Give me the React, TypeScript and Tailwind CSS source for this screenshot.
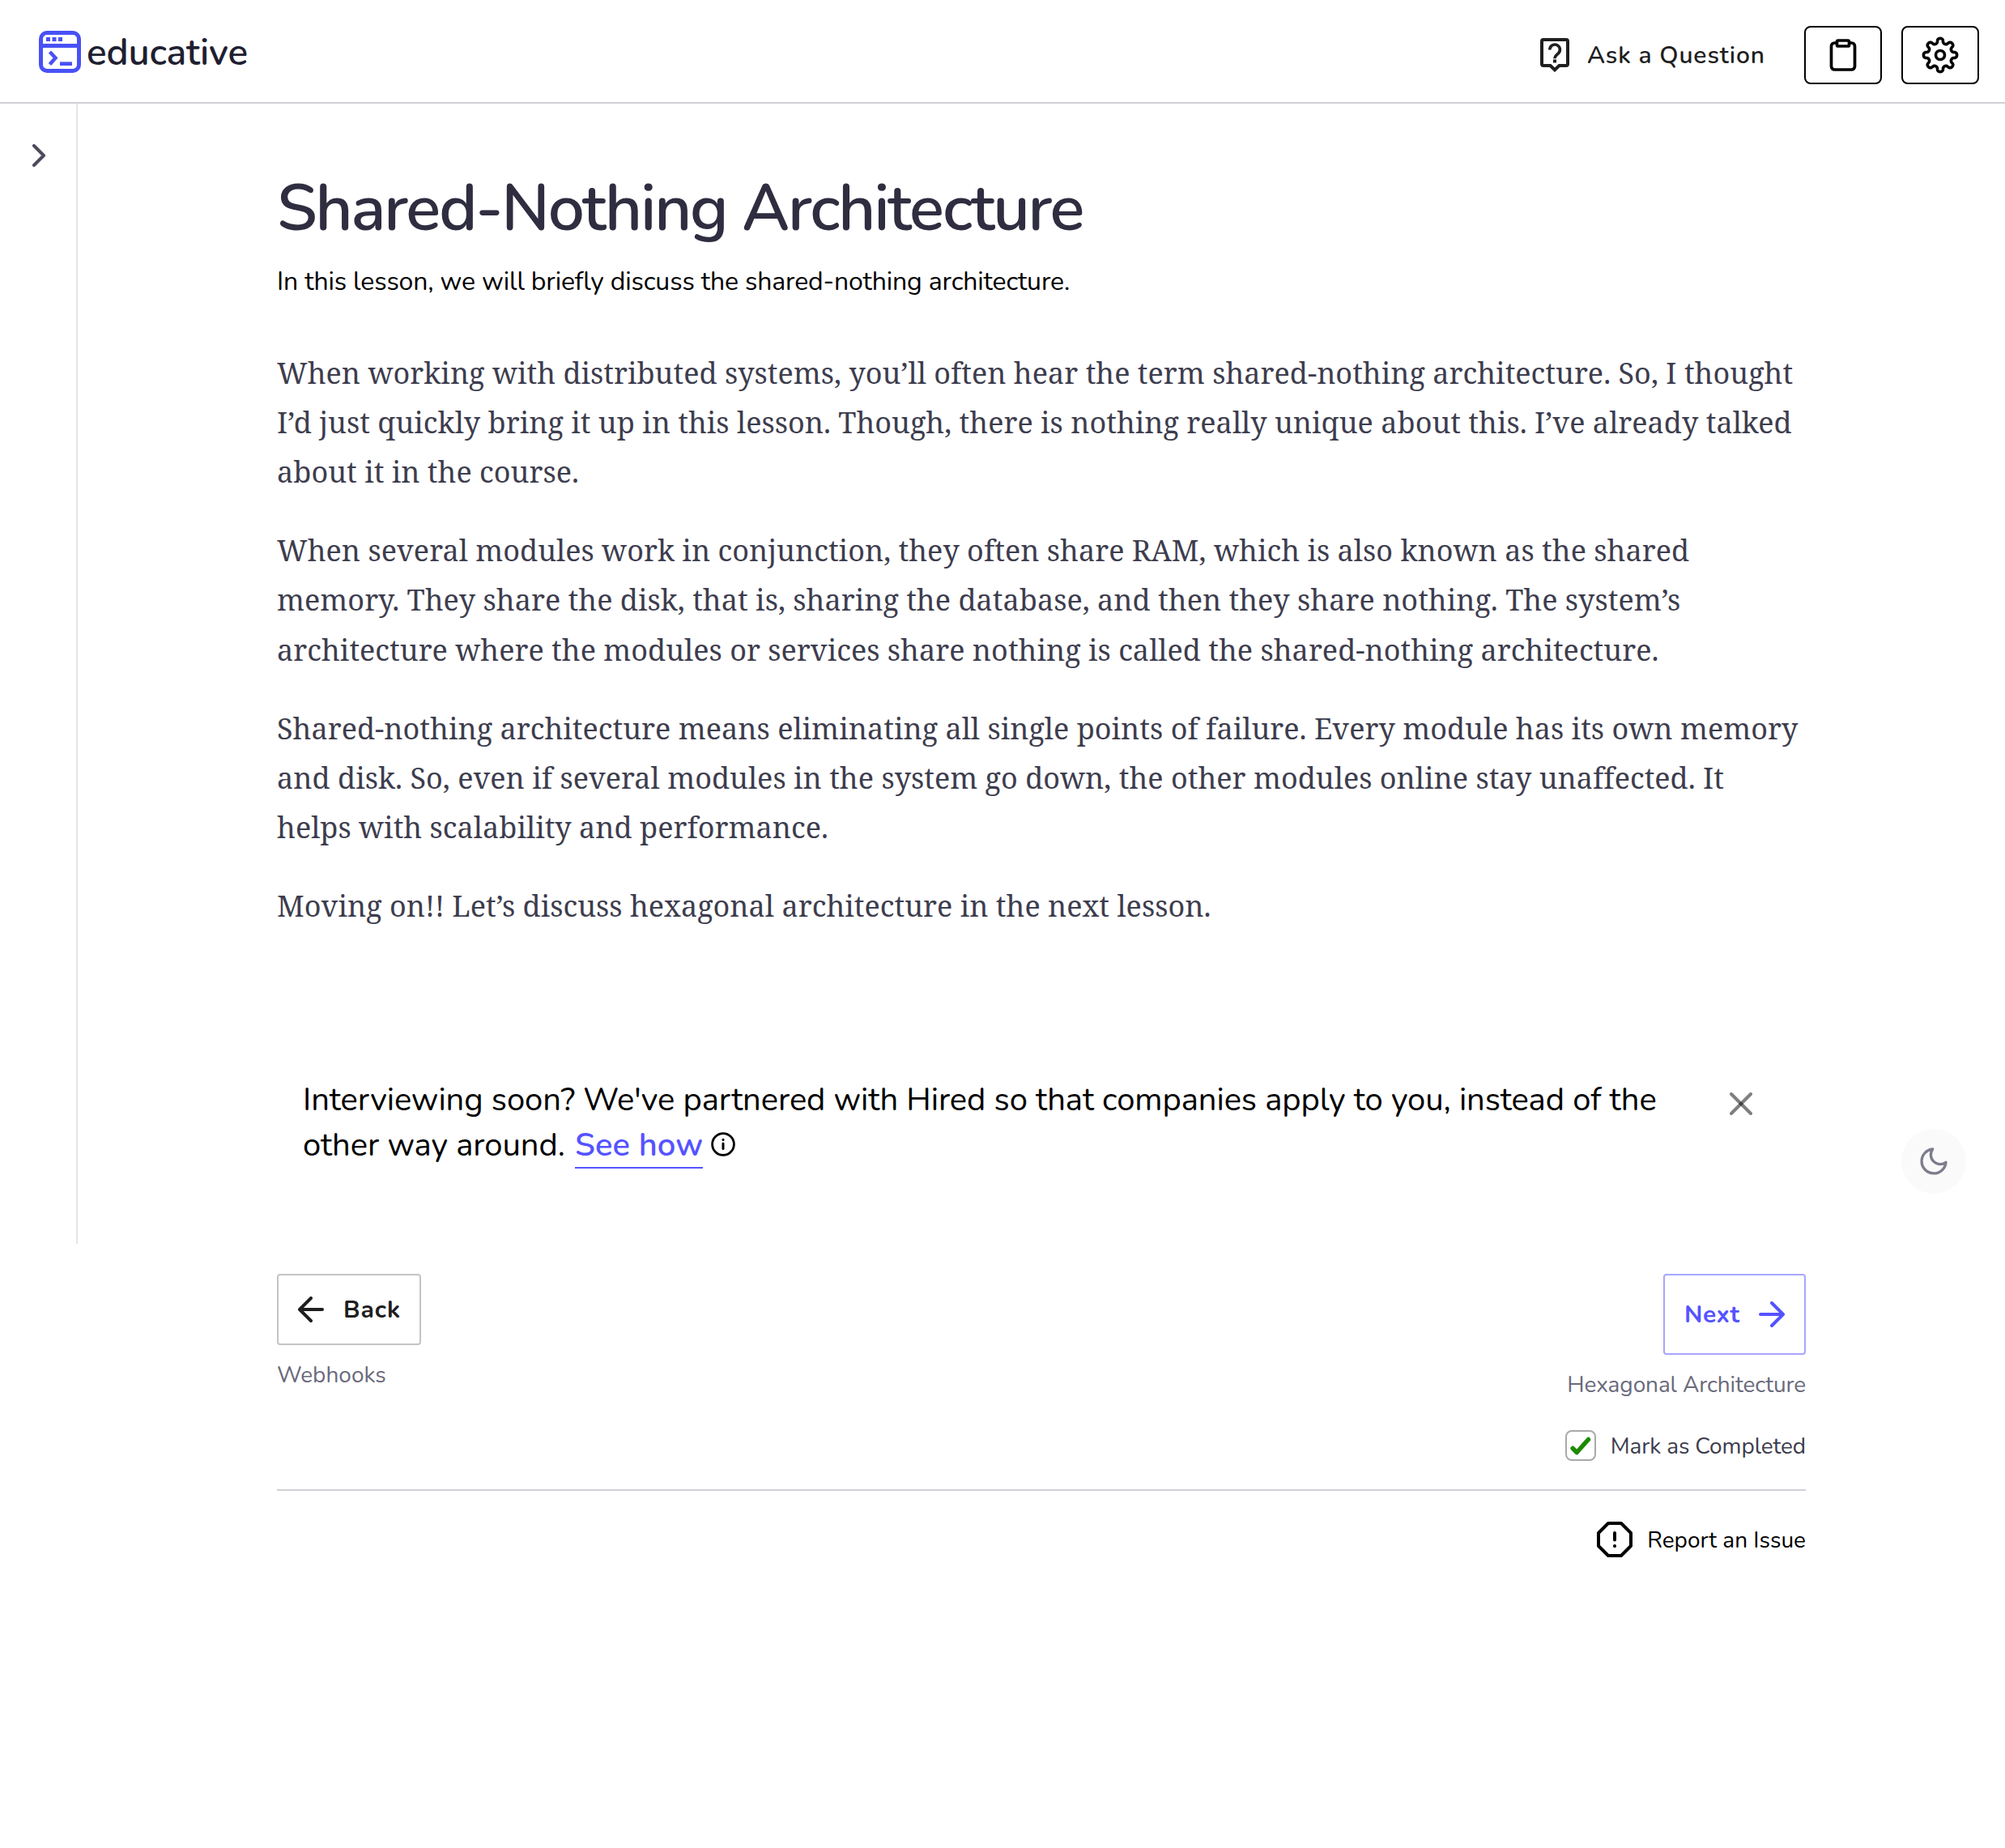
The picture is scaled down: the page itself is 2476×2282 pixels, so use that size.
const gearPath = (() => {
  const pts: string[] = [];
  for (let i = 0; i < 240; i++) {
    const t = (i / 240) * Math.PI * 2;
    const a = t + 0.042 * Math.sin(16 * t);
    const r = 17.7 + 2.9 * Math.cos(8 * t);
    pts.push((24 + r * Math.cos(a)).toFixed(2) + " " + (24 + r * Math.sin(a)).toFixed(2));
  }
  return "M" + pts.join("L") + "Z";
})();

function Logo() {
  return (
    <div className="flex pt-[38px] pl-12">
      <svg width="52" height="52" viewBox="0 0 52 52" fill="none" stroke="#4951f5">
        <rect x="2.5" y="2.5" width="47" height="47" rx="7.5" strokeWidth="5" />
        <path d="M3 18.5H49" strokeWidth="5" />
        <path d="M9 10.5h5M16.500 10.500h5M24 10.500h5" strokeWidth="5" />
        <path d="M13.500 26l7 7.500-7 8" strokeWidth="4.500" />
        <path d="M26 40.700h15" strokeWidth="4.600" />
      </svg>
      <span className="ml-[7px] text-[46px] leading-[54px] font-semibold tracking-[-0.200px] text-[#1f1f32]">educative</span>
    </div>
  );
}

function Arrow({ flip }: { flip?: boolean }) {
  return (
    <svg width="32" height="32" viewBox="0 0 32 32" fill="none" stroke="currentColor" strokeWidth="4" strokeLinecap="round" strokeLinejoin="round" className={flip ? "rotate-180" : ""}>
      <path d="M2 16H30M16 2l14 14-14 14" />
    </svg>
  );
}

function Tools() {
  return (
    <div className="mt-8 mr-8 flex h-[72px] items-center">
      <svg width="36" height="42" viewBox="0 0 36 42" fill="none" stroke="#1f1f1f" className="mr-[22px]">
        <path d="M4 2H32a2 2 0 0 1 2 2V32a2 2 0 0 1-2 2H23.500L18 39.300 12.500 34H4a2 2 0 0 1-2-2V4a2 2 0 0 1 2-2Z" strokeWidth="4" />
        <path d="M11.800 14.500a6.300 6.300 0 1 1 11 4c-1.900 2.100-4.800 3.200-4.800 6.800" strokeWidth="3.600" />
        <path d="M18 26.500v4" strokeWidth="4" />
      </svg>
      <span className="mr-12 pt-[2px] text-[30px] leading-10 font-semibold tracking-[0.900px] whitespace-nowrap text-[#1f1f1f]">Ask a Question</span>
      <button className="mr-6 flex h-[72px] w-24 items-center justify-center rounded-lg border-2 border-black">
        <svg width="34" height="42" viewBox="0 0 34 42" fill="none" stroke="#000" strokeWidth="3.700" strokeLinejoin="round">
          <path d="M9 6H6.500a4 4 0 0 0-4 4V35a4 4 0 0 0 4 4H27.500a4 4 0 0 0 4-4V10a4 4 0 0 0-4-4H25" />
          <rect x="9.500" y="3" width="15" height="7" rx="1.500" />
        </svg>
      </button>
      <button className="flex h-[72px] w-24 items-center justify-center rounded-lg border-2 border-black">
        <svg width="48" height="48" viewBox="0 0 48 48" fill="none" stroke="#000">
          <path d={gearPath} strokeWidth="3.600" />
          <circle cx="24" cy="24" r="5.500" strokeWidth="3.600" />
        </svg>
      </button>
    </div>
  );
}

export default function App() {
  return (
    <div className="relative h-[2282px] w-full overflow-hidden bg-white font-['Nunito','Open_Sans',sans-serif] font-normal text-black">
      <header className="flex h-32 items-start justify-between border-b-2 border-[#d0d0d6]">
        <Logo />
        <Tools />
      </header>

      <div className="flex items-start">
        <aside className="flex h-[1408px] w-24 shrink-0 justify-center border-r-2 border-[#e6e6e8] pt-[50px] pl-[2px]">
          <svg width="18" height="28" viewBox="0 0 18 28" fill="none" stroke="#4b4b5c" strokeWidth="4" strokeLinecap="round" strokeLinejoin="round">
            <path d="M3 2l12 12L3 26" />
          </svg>
        </aside>

        <main className="ml-[246px] w-[1888px] pt-[82px]">
          <h1 className="text-[80px] leading-[96px] font-semibold tracking-[-2.180px] whitespace-nowrap text-[#2f2d40]">Shared-Nothing Architecture</h1>
          <p className="mt-[18px] text-[32px] leading-[48px] tracking-[-0.150px] whitespace-nowrap">In this lesson, we will briefly discuss the shared-nothing architecture.</p>

          <div className="mt-[57.600px] flex flex-col gap-9 pr-1 font-['Noto_Serif','DejaVu_Serif',serif] text-[36px] leading-[61.200px] tracking-[0.015px] text-[#3d3d4e]">
            <p>When working with distributed systems, you’ll often hear the term shared-nothing architecture. So, I thought I’d just quickly bring it up in this lesson. Though, there is nothing really unique about this. I’ve already talked about it in the course.</p>
            <p>When several modules work in conjunction, they often share RAM, which is also known as the shared memory. They share the disk, that is, sharing the database, and then they share nothing. The system’s architecture where the modules or services share nothing is called the shared-nothing architecture.</p>
            <p>Shared-nothing architecture means eliminating all single points of failure. Every module has its own memory and disk. So, even if several modules in the system go down, the other modules online stay unaffected. It helps with scalability and performance.</p>
            <p>Moving on!! Let’s discuss hexagonal architecture in the next lesson.</p>
          </div>

          <section className="mt-[180.200px] flex h-28 items-start justify-between pr-[66px] pl-8">
            <p className="text-[40px] leading-[56px] tracking-[-0.085px] whitespace-nowrap">
              Interviewing soon? We've partnered with Hired so that companies apply to you, instead of the
              <br />
              other way around.{" "}
              <a className="ml-[2px] border-b-2 border-[#5553ff] font-semibold tracking-[0.080px] text-[#5553ff]">See how</a>
              <svg width="30" height="30" viewBox="0 0 30 30" fill="none" stroke="#000" className="ml-[10px] inline-block align-[-1px]">
                <circle cx="15" cy="15" r="13.400" strokeWidth="2.800" />
                <path d="M15 14v6.500M15 9.300v.2" strokeWidth="3" strokeLinecap="round" />
              </svg>
            </p>
            <svg width="28" height="28" viewBox="0 0 28 28" fill="none" stroke="#000" strokeOpacity="0.500" strokeWidth="4" strokeLinecap="round" className="mt-[19px]">
              <path d="M2 2l24 24" />
              <path d="M26 2L2 26" />
            </svg>
          </section>

          <nav className="mt-[131px] flex items-start justify-between text-[28px]">
            <div>
              <button className="flex h-[88px] w-[178px] items-center rounded border-2 border-[#c4c4c4] pl-6 font-bold text-[#1f1f1f]">
                <Arrow flip />
                <span className="ml-6 pt-[2px] text-[30px] tracking-[0.900px]">Back</span>
              </button>
              <p className="mt-[17px] leading-10 text-[#6a6a7c]">Webhooks</p>
            </div>
            <div className="flex flex-col items-end">
              <button className="flex h-[100px] w-[176px] items-center justify-between rounded border-2 border-[#a8a6ff] pr-6 pl-6 font-bold text-[#5553ff]">
                <span className="pt-[2px] text-[30px] tracking-[0.500px]">Next</span>
                <Arrow />
              </button>
              <p className="mt-[17px] leading-10 tracking-[-0.110px] text-[#6a6a7c]">Hexagonal Architecture</p>
              <label className="mt-9 flex h-[38px] items-center">
                <span className="flex h-[38px] w-[38px] items-center justify-center rounded-lg border-2 border-[#a9a9a9]">
                  <svg width="34" height="34" viewBox="0 0 34 34" fill="none" stroke="#1d8a00" strokeWidth="5.500" strokeLinecap="round" strokeLinejoin="round">
                    <path d="M7.200 20.500l5 5L26.500 9.500" />
                  </svg>
                </span>
                <span className="ml-[18px] pt-[2px] tracking-[-0.110px] text-[#3d3d4e]">Mark as Completed</span>
              </label>
            </div>
          </nav>

          <div className="mt-[35px] h-[2px] bg-[#d0d0d6]" />
          <div className="mt-[38px] flex h-11 items-center justify-end text-[28px]">
            <svg width="44" height="44" viewBox="0 0 44 44" fill="none" stroke="#000" strokeWidth="4" strokeLinejoin="round">
              <path d="M14 2H30L42 14V30L30 42H14L2 30V14Z" />
              <path d="M22 14v8.500M22 30v.2" strokeLinecap="round" />
            </svg>
            <span className="ml-[18px] pt-[2px]">Report an Issue</span>
          </div>
        </main>
      </div>

      <button className="absolute top-[1394px] left-[2348px] flex h-20 w-20 items-center justify-center rounded-full bg-[#fafafa]">
        <svg width="40" height="40" viewBox="0 0 24 24" fill="none" stroke="#7d7d8c" strokeWidth="2" strokeLinecap="round" strokeLinejoin="round">
          <path d="M21 12.790A9 9 0 1 1 11.210 3 7 7 0 0 0 21 12.790z" />
        </svg>
      </button>
    </div>
  );
}
